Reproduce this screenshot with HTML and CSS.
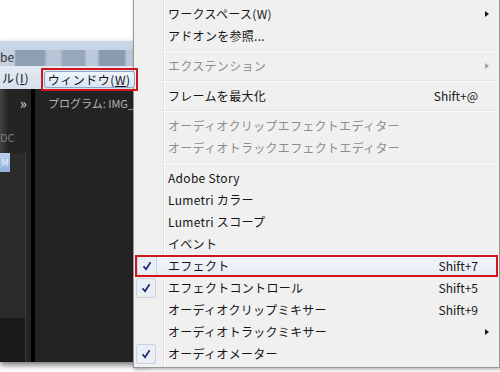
FILE: index.html
```html
<!DOCTYPE html>
<html lang="ja">
<head>
<meta charset="UTF-8">
<title>ウィンドウ メニュー</title>
<link rel="stylesheet" href="styles.css">
</head>
<body>
<div class="shot">

    <!-- cropped application window behind the menu -->
    <div class="app">
        <div class="titlebar">
            <div class="title-strip"><span class="title-text">be</span></div>
        </div>
        <div class="menubar">
            <span class="mb-item">ル(<u>I</u>)</span>
            <span class="mb-mark">
                <span class="mb-item active">ウィンドウ(<u>W</u>)</span>
            </span>
        </div>
        <div class="workspace">
            <div class="side">
                <div class="side-tab">»</div>
                <div class="side-text">DC</div>
                <div class="side-panel">
                    <span class="side-chip">M</span>
                    <div class="side-foot"></div>
                </div>
            </div>
            <div class="divider"></div>
            <div class="monitor">
                <div class="monitor-head">プログラム: IMG_0</div>
            </div>
        </div>
    </div>

    <!-- dropdown menu -->
    <ul class="menu">
        <li class="item"><span class="check"></span><span class="label">ワークスペース(W)</span><span class="key"></span><span class="sub"></span></li>
        <li class="item"><span class="check"></span><span class="label">アドオンを参照...</span><span class="key"></span><span></span></li>
        <li class="sep"></li>
        <li class="item disabled"><span class="check"></span><span class="label">エクステンション</span><span class="key"></span><span class="sub"></span></li>
        <li class="sep"></li>
        <li class="item"><span class="check"></span><span class="label">フレームを最大化</span><span class="key">Shift+@</span><span></span></li>
        <li class="sep"></li>
        <li class="item disabled"><span class="check"></span><span class="label">オーディオクリップエフェクトエディター</span><span class="key"></span><span></span></li>
        <li class="item disabled"><span class="check"></span><span class="label">オーディオトラックエフェクトエディター</span><span class="key"></span><span></span></li>
        <li class="sep"></li>
        <li class="item"><span class="check"></span><span class="label">Adobe Story</span><span class="key"></span><span></span></li>
        <li class="item"><span class="check"></span><span class="label">Lumetri カラー</span><span class="key"></span><span></span></li>
        <li class="item"><span class="check"></span><span class="label">Lumetri スコープ</span><span class="key"></span><span></span></li>
        <li class="item"><span class="check"></span><span class="label">イベント</span><span class="key"></span><span></span></li>
        <li class="item hover marked">
            <span class="check on"><svg viewBox="0 0 10 10" width="10" height="10"><path d="M1.5 5.2 L4 8.3 L8.6 1.2" /></svg></span>
            <span class="label">エフェクト</span><span class="key">Shift+7</span><span></span>
        </li>
        <li class="item">
            <span class="check on"><svg viewBox="0 0 10 10" width="10" height="10"><path d="M1.5 5.2 L4 8.3 L8.6 1.2" /></svg></span>
            <span class="label">エフェクトコントロール</span><span class="key">Shift+5</span><span></span>
        </li>
        <li class="item"><span class="check"></span><span class="label">オーディオクリップミキサー</span><span class="key">Shift+9</span><span></span></li>
        <li class="item"><span class="check"></span><span class="label">オーディオトラックミキサー</span><span class="key"></span><span class="sub"></span></li>
        <li class="item">
            <span class="check on"><svg viewBox="0 0 10 10" width="10" height="10"><path d="M1.5 5.2 L4 8.3 L8.6 1.2" /></svg></span>
            <span class="label">オーディオメーター</span><span class="key"></span><span></span>
        </li>
    </ul>

</div>
</body>
</html>
```

FILE: styles.css
```css
html, body {
    margin: 0;
    padding: 0;
    background: #fff;
}
body {
    font-family: "Noto Sans CJK JP", "Noto Sans", sans-serif;
    overflow: hidden;
}
.shot {
    position: relative;
    width: 500px;
    height: 372px;
    overflow: hidden;
}

/* ---- application behind ---- */
.app {
    width: 150px;
    margin-top: 41px;
    height: 321px;
    display: flex;
    flex-direction: column;
    box-shadow: 0 3px 6px rgba(0,0,0,0.55);
}
.titlebar {
    height: 25px;
    background: linear-gradient(#c9d7e6, #bccbdc);
    padding-top: 9px;
    box-sizing: border-box;
}
.title-strip {
    height: 16px;
    background: linear-gradient(to right,
        #c3d0de 0 14px, #8e9eb3 16px 44px, #b7c5d6 47px 60px,
        #97a8bd 63px 84px, #bccadb 87px 97px, #8a9bb1 100px 124px,
        #b9c7d8 127px);
}
.title-text {
    display: block;
    font-size: 12px;
    line-height: 14px;
    color: #333;
}
.menubar {
    height: 23px;
    display: flex;
    align-items: flex-start;
    gap: 11px;
    background: linear-gradient(#e3eaf3, #d6e0ec);
    font-size: 12px;
    color: #111;
}
.menubar > .mb-item {
    padding-left: 2px;
    line-height: 23px;
    letter-spacing: 1px;
}
.mb-mark {
    position: relative;
    z-index: 1;
    width: 97px;
    height: 23px;
    margin-top: 2px;
    padding: 1px;
    box-sizing: border-box;
    display: flex;
    border: 2px solid #d0151d;
}
.mb-item.active {
    flex: 1;
    line-height: 15px;
    text-align: center;
    border: 1px solid #8aa6c8;
    border-radius: 3px;
    background: linear-gradient(#eef4fb, #d9e6f4);
    letter-spacing: 0.5px;
}
.workspace {
    flex: 1;
    display: flex;
    background: #232323;
}
.side {
    width: 31px;
    display: flex;
    flex-direction: column;
    background: #242424;
    background-image: linear-gradient(to right, rgba(255,255,255,0.14), transparent 8px);
}
.side-tab {
    height: 28px;
    padding-right: 4px;
    text-align: right;
    font-size: 15px;
    line-height: 28px;
    color: #d4d4d4;
}
.side-text {
    height: 36px;
    font-size: 11px;
    line-height: 40px;
    color: #7c7c7c;
}
.side-panel {
    flex: 1;
    width: 26px;
    display: flex;
    flex-direction: column;
    border-right: 1px solid #3a3a3a;
    box-sizing: border-box;
    background: #2b2b2b;
}
.side-chip {
    width: 10px;
    height: 19px;
    background: linear-gradient(#b9d0ee, #8fb1de);
    color: #e9f1fb;
    font-size: 9px;
    line-height: 19px;
    text-align: center;
}
.side-foot {
    margin-top: auto;
    height: 44px;
    background: #1a1a1a;
}
.divider {
    width: 4px;
    background: #000;
}
.monitor {
    flex: 1;
    background: #232323;
}
.monitor-head {
    padding: 6px 0 0 13px;
    font-size: 11px;
    color: #b5b5b5;
    white-space: nowrap;
}

/* ---- dropdown menu ---- */
.menu {
    position: absolute;
    top: 0;
    left: 133px;
    width: 367px;
    height: 368px;
    box-sizing: border-box;
    margin: 0;
    padding: 3px 0 0;
    list-style: none;
    border: 1px solid #979797;
    border-top: none;
    background: linear-gradient(to right, transparent 29px, #e2e3e3 29px 30px, #fff 30px 31px, transparent 31px), #f0f0f0;
    box-shadow: 1px 2px 3px rgba(0,0,0,0.25);
    font-size: 12px;
    color: #151515;
}
.item {
    height: 22px;
    margin: 0 1px;
    display: grid;
    grid-template-columns: 33px 1fr auto 20px;
    align-items: center;
    line-height: 22px;
    white-space: nowrap;
}
.label {
    letter-spacing: 0.3px;
}
.item.disabled {
    color: #8d8d8d;
}
.item.hover {
    background: linear-gradient(#f3f6fb, #e5ebf4);
}
.item.marked {
    outline: 2px solid #d0151d;
    outline-offset: -2px;
}
.check {
    height: 20px;
}
.check.on {
    width: 20px;
    height: 20px;
    margin-left: 1px;
    box-sizing: border-box;
    display: flex;
    align-items: center;
    justify-content: center;
    border: 1px solid #c9d1de;
    border-radius: 2px;
    background: #eaeef5;
}
.check.on svg path {
    fill: none;
    stroke: #1c2a78;
    stroke-width: 1.7;
}
.item.marked .check.on {
    margin-left: 2px;
}
.key {
    text-align: right;
}
.sub {
    width: 0;
    height: 0;
    margin-left: 7px;
    border-top: 3.5px solid transparent;
    border-bottom: 3.5px solid transparent;
    border-left: 4px solid #1a1a1a;
}
.item.disabled .sub {
    border-left-color: #a0a0a0;
}
.sep {
    height: 0;
    margin: 3px 2px 3px 29px;
    border-top: 1px solid #e2e3e3;
    border-bottom: 1px solid #fff;
}
```
